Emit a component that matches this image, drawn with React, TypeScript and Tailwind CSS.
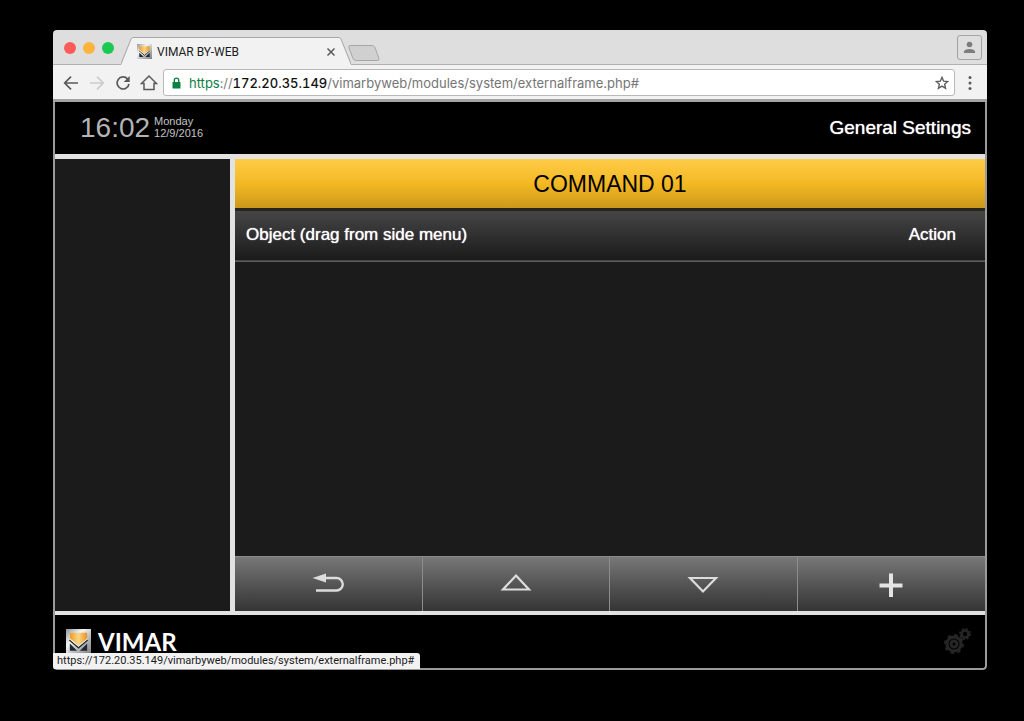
import { useState } from 'react';
import type { ReactNode } from 'react';

const PATH = '/vimarbyweb/modules/system/externalframe.php#';

function VimarMark({ size }: { size: number }) {
    return (
        <svg width={size} height={size} viewBox="0 0 26 26" className="shrink-0" aria-hidden="true">
            <defs>
                <linearGradient id="silver" x1="0" y1="0" x2="1" y2="1">
                    <stop offset="0" stopColor="#8f959c" />
                    <stop offset="0.35" stopColor="#f4f4f4" />
                    <stop offset="0.65" stopColor="#b4b8bc" />
                    <stop offset="1" stopColor="#7b8188" />
                </linearGradient>
                <linearGradient id="amber" x1="0" y1="0" x2="1" y2="0">
                    <stop offset="0" stopColor="#eb9d26" />
                    <stop offset="0.5" stopColor="#fbd583" />
                    <stop offset="1" stopColor="#e8931c" />
                </linearGradient>
            </defs>
            <rect width="26" height="26" fill="url(#silver)" />
            <path d="M4 15 L11.500 22.500 L4 22.500Z M22 15 L14.500 22.500 L22 22.500Z" fill="#23262a" />
            <path d="M4 4 H22 V10 L13 17 L4 10Z" fill="url(#amber)" />
            <path d="M3.500 11.500 L13 19.500 L22.500 11.500" fill="none" stroke="#2a2a2a" strokeWidth="1.500" />
            <path d="M3.500 10 L13 18 L22.500 10" fill="none" stroke="#f7f3e8" strokeWidth="1" />
        </svg>
    );
}

function NavButton({ label, disabled, children }: { label: string; disabled?: boolean; children: ReactNode }) {
    return (
        <button
            aria-label={label}
            disabled={disabled}
            className="flex h-5 w-5 items-center justify-center text-[#5a5a5a] disabled:text-[#cccccc]"
        >
            <svg width="18" height="18" viewBox="0 0 18 18" fill="none" stroke="currentColor" strokeWidth="1.7">
                {children}
            </svg>
        </button>
    );
}

function TabStrip() {
    return (
        <div className="flex h-[35px] items-end border-b border-[#b0b0b0] bg-[#dedede]">
            <div className="flex gap-[7px] self-center pl-[11px] pt-0.5">
                <button aria-label="Close window" className="h-3 w-3 rounded-full bg-[#fc5b57]" />
                <button aria-label="Minimize window" className="h-3 w-3 rounded-full bg-[#fdb43c]" />
                <button aria-label="Zoom window" className="h-3 w-3 rounded-full bg-[#19c951]" />
            </div>

            <div className="-mb-px ml-[7px] flex h-7">
                <svg width="12" height="28" className="shrink-0" aria-hidden="true">
                    <path d="M0 28 L10 2 Q11 0 12 0 V28Z" fill="#f2f2f2" />
                    <path d="M0 27 L10 2 Q11 0.5 12 0.5" fill="none" stroke="#a6a6a6" />
                </svg>
                <div className="flex w-[206px] items-center border-t border-[#a6a6a6] bg-[#f2f2f2] pl-1">
                    <VimarMark size={15} />
                    <span className="ml-[5px] flex-1 font-['Roboto',sans-serif] text-xs leading-4 text-[#1c1c1c]">VIMAR BY-WEB</span>
                    <button aria-label="Close tab" className="mr-0.5 p-px">
                        <svg width="10" height="10" viewBox="0 0 10 10" stroke="#5a5a5a" strokeWidth="1.5">
                            <path d="M1.5 1.5 L8.5 8.5 M8.5 1.5 L1.5 8.5" />
                        </svg>
                    </button>
                </div>
                <svg width="12" height="28" className="shrink-0" aria-hidden="true">
                    <path d="M12 28 L2 2 Q1 0 0 0 V28Z" fill="#f2f2f2" />
                    <path d="M12 27 L2 2 Q1 0.5 0 0.5" fill="none" stroke="#a6a6a6" />
                </svg>
            </div>

            <button aria-label="New tab" className="-ml-[3px] mb-[3px]">
                <svg width="32" height="16" viewBox="0 0 32 16" className="block">
                    <path
                        d="M2 0.5 H24 Q26 0.5 27 2.5 L31 13.5 Q31.500 15.500 29.500 15.500 H8 Q6 15.500 5 13.500 L0.800 2.500 Q0.500 0.500 2 0.500Z"
                        fill="#d0d0d0"
                        stroke="#a6a6a6"
                    />
                </svg>
            </button>

            <button
                aria-label="Profile"
                className="mb-1 ml-auto mr-[5px] flex h-[25px] w-[25px] items-center justify-center rounded-[3px] border border-[#a3a3a3]"
            >
                <svg width="13" height="13" viewBox="0 0 13 13" fill="#7d7d7d">
                    <circle cx="6.500" cy="3.500" r="2.800" />
                    <path d="M1 12 V10.500 Q1.500 8 6.500 8 Q11.500 8 12 10.500 V12Z" />
                </svg>
            </button>
        </div>
    );
}

function Toolbar() {
    const [path, setPath] = useState(PATH);

    return (
        <div className="flex items-center border-b-[3px] border-[#a3a3a3] bg-[#f2f2f2] pb-[3px] pl-2 pr-[9px] pt-1">
            <div className="flex gap-[6px]">
                <NavButton label="Back">
                    <path d="M16 9 H3 M9 2.700 L2.700 9 L9 15.300" />
                </NavButton>
                <NavButton label="Forward" disabled>
                    <path d="M2 9 H15 M9 2.700 L15.300 9 L9 15.300" />
                </NavButton>
                <NavButton label="Reload">
                    <path d="M13.600 5 A6 6 0 1 0 15 10" />
                    <path d="M15.700 2 V8 H9.700Z" fill="currentColor" stroke="none" />
                </NavButton>
                <NavButton label="Home">
                    <path d="M1.500 9.500 L9 2 L16.500 9.500 H14 V15.500 H4 V9.500Z" strokeWidth="1.500" />
                </NavButton>
            </div>

            <div className="ml-1 flex h-[27px] flex-1 items-center rounded-[3px] border border-[#b8b8b8] bg-white pl-2 pr-[5px] text-[13px] leading-4">
                <svg width="9" height="12" viewBox="0 0 9 12" className="mr-2 shrink-0" aria-hidden="true">
                    <rect x="0.500" y="5" width="8" height="6.500" rx="0.500" fill="#0b8043" />
                    <path d="M2.300 5 V3.300 A2.200 2.200 0 0 1 6.700 3.300 V5" fill="none" stroke="#0b8043" strokeWidth="1.400" />
                </svg>
                <label htmlFor="path" className="whitespace-nowrap font-medium tabular-nums text-[#111111]">
                    <span className="font-normal text-[#0b8043]">https</span>
                    <span className="font-normal text-[#7d7d7d]">://</span>
                    172.20.35.149
                </label>
                <input
                    id="path"
                    value={path}
                    onChange={(e) => setPath(e.target.value)}
                    className="min-w-0 flex-1 bg-transparent text-[#757575] outline-none"
                />
                <button aria-label="Bookmark this page">
                    <svg width="14" height="14" viewBox="0 0 14 14" fill="none" stroke="#5a5a5a" strokeWidth="1.300">
                        <path d="M7 1.300 L8.600 5.100 L12.800 5.500 L9.600 8.200 L10.600 12.300 L7 10.100 L3.400 12.300 L4.400 8.200 L1.200 5.500 L5.400 5.100Z" />
                    </svg>
                </button>
            </div>

            <button aria-label="Browser menu" className="ml-[7px]">
                <svg width="16" height="16" viewBox="0 0 16 16" fill="#5a5a5a">
                    <circle cx="8" cy="2.500" r="1.500" />
                    <circle cx="8" cy="8" r="1.500" />
                    <circle cx="8" cy="13.500" r="1.500" />
                </svg>
            </button>
        </div>
    );
}

const actions = [
    {
        label: 'Back',
        icon: (
            <>
                <path d="M14 8 H24.500 A6 6 0 0 1 24.500 20.500 H4" fill="none" stroke="#dcdcdc" strokeWidth="2.400" />
                <path d="M0.500 8 L14 3.500 V12.500Z" fill="#dcdcdc" />
            </>
        ),
    },
    {
        label: 'Move up',
        icon: <path d="M16 5.500 L29 19.500 H3Z" fill="none" stroke="#dcdcdc" strokeWidth="2.200" />,
    },
    {
        label: 'Move down',
        icon: <path d="M3 8 H29 L16 21.500Z" fill="none" stroke="#dcdcdc" strokeWidth="2.200" />,
    },
    {
        label: 'Add',
        icon: <path d="M16 3.500 V27 M4.500 15.500 H27.500" stroke="#e4e4e4" strokeWidth="4" />,
    },
];

export default function App() {
    return (
        <div className="flex min-h-screen flex-col bg-black pb-[51px] pl-[53px] pr-[37px] pt-[30px] font-['Inter',sans-serif]">
            <div className="relative flex flex-1 flex-col overflow-hidden rounded-[4px]">
                <TabStrip />
                <Toolbar />

                <div className="flex flex-1 flex-col rounded-b-[4px] border-x-2 border-b-2 border-[#9b9b9b] bg-black font-['Liberation_Sans',Arial,sans-serif]">
                    <header className="flex h-[52px] items-center justify-between pl-[25px] pr-[14px]">
                        <div className="flex items-center gap-1 text-[#b4b4b4]">
                            <span className="text-[28px] leading-8">16:02</span>
                            <div className="pb-0.5 text-[11px] leading-3 text-[#c4c4c4]">
                                <p>Monday</p>
                                <p>12/9/2016</p>
                            </div>
                        </div>
                        <h1 className="text-[19px] leading-6 text-white [text-shadow:0_0_1px_#fff]">General Settings</h1>
                    </header>

                    <div className="flex flex-1 border-b-4 border-t-[5px] border-[#e2e2e2]">
                        <aside className="w-[180px] shrink-0 border-r-[5px] border-[#e2e2e2] bg-[#1b1b1b]" />

                        <main className="flex min-w-0 flex-1 flex-col bg-[#1b1b1b]">
                            <h2 className="h-[52px] border-b-[3px] border-[#282420] bg-linear-to-b from-[#ffcc47] via-[#f3b922] to-[#cc981b] text-center text-[23px] leading-[51px] text-black">
                                COMMAND 01
                            </h2>
                            <table className="w-full">
                                <thead>
                                    <tr className="h-[50px] border-b border-[#5c5c5c] bg-linear-to-b from-[#464646] to-[#1b1b1b] text-[17px] leading-5 text-white [text-shadow:0_0_1px_#fff]">
                                        <th className="pb-px pl-[11px] text-left font-normal">Object (drag from side menu)</th>
                                        <th className="pb-px pr-[29px] text-right font-normal">Action</th>
                                    </tr>
                                </thead>
                            </table>

                            <div className="mt-auto grid h-[55px] grid-cols-4 border-t border-[#8c8c8c]">
                                {actions.map((action) => (
                                    <button
                                        key={action.label}
                                        aria-label={action.label}
                                        className="flex items-center justify-center border-r border-[#8c8c8c] bg-linear-to-b from-[#787878] to-[#353535] last:border-r-0"
                                    >
                                        <svg width="32" height="28" viewBox="0 0 32 28">
                                            {action.icon}
                                        </svg>
                                    </button>
                                ))}
                            </div>
                        </main>
                    </div>

                    <footer className="flex h-[53px] items-center justify-between pl-[11px] pr-[14px]">
                        <div className="flex items-center gap-[7px]">
                            <VimarMark size={25} />
                            <span className="font-['Lato',sans-serif] text-2xl font-bold leading-6 text-white">VIMAR</span>
                        </div>
                        <button aria-label="Settings">
                            <svg width="28" height="28" viewBox="0 0 28 28" fill="none" stroke="#262626">
                                <circle cx="11" cy="16" r="7" strokeWidth="3" />
                                <circle cx="11" cy="16" r="9" strokeWidth="2" strokeDasharray="3.500 3.570" />
                                <circle cx="11" cy="16" r="3" strokeWidth="3" />
                                <circle cx="22" cy="6" r="3.500" strokeWidth="2.500" />
                                <circle cx="22" cy="6" r="5" strokeWidth="2" strokeDasharray="2 1.930" />
                            </svg>
                        </button>
                    </footer>
                </div>

                <div className="absolute bottom-px left-0 rounded-tr-[3px] bg-[#f2f2f2] pl-1 pr-[6px] font-['Roboto',sans-serif] text-[11px] leading-4 text-[#1c1c1c]">
                    https://172.20.35.149{PATH}
                </div>
            </div>
        </div>
    );
}
